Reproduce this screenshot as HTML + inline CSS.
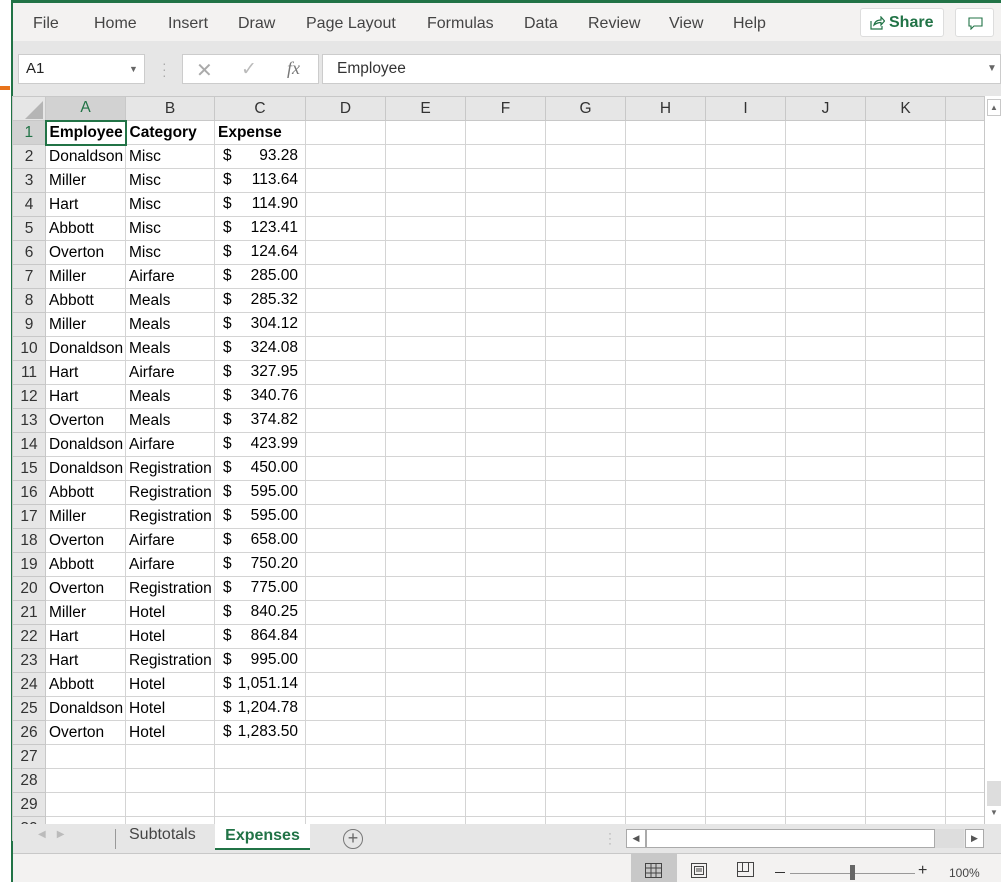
<!DOCTYPE html>
<html><head><meta charset="utf-8"><style>
*{box-sizing:border-box;margin:0;padding:0}
body{width:1001px;height:882px;overflow:hidden;background:#fff;font-family:"Liberation Sans",sans-serif;position:relative}
.abs{position:absolute}
#menu span{position:absolute;top:12px;font-size:16px;color:#444}
table{border-collapse:collapse;table-layout:fixed;position:absolute;left:12px;top:96px;width:972px}
td{border:1px solid #d4d4d4;height:24px;font-size:15.5px;color:#000;white-space:nowrap;overflow:hidden;padding:0;text-indent:3px;line-height:22px}
tr.h td{background:#e6e6e6;text-align:center;color:#333;height:24px;border-color:#c8c8c8;text-indent:0}
td.r{background:#e6e6e6;text-align:center;color:#333;border-color:#c8c8c8;text-indent:0}
td.c{position:relative;text-indent:0}
td.c b{font-weight:normal;position:absolute;left:8px;top:0}
td.c i{font-style:normal;position:absolute;right:7px;top:0}
</style></head><body>
<div class="abs" style="left:0;top:0;width:11px;height:882px;background:#fff"></div>
<div class="abs" style="left:0;top:86px;width:10px;height:4px;background:#e8731b"></div>
<div class="abs" style="left:11px;top:0;width:2px;height:882px;background:#217346"></div>
<div class="abs" style="left:13px;top:0;width:988px;height:3px;background:#217346"></div>
<div id="menu" class="abs" style="left:13px;top:3px;width:988px;height:38px;background:#f3f2f1">
<span style="left:20px">File</span><span style="left:81px">Home</span><span style="left:155px">Insert</span><span style="left:225px">Draw</span><span style="left:293px">Page Layout</span><span style="left:414px">Formulas</span><span style="left:511px">Data</span><span style="left:575px">Review</span><span style="left:656px">View</span><span style="left:720px">Help</span>
</div>
<div class="abs" style="left:860px;top:8px;width:84px;height:29px;background:#fff;border:1px solid #ddd;border-radius:3px;color:#217346;font-weight:bold;font-size:16px;line-height:27px;padding-left:28px">Share
<svg class="abs" style="left:9px;top:7px" width="15" height="14" viewBox="0 0 15 14"><path d="M1 5v8h11v-3M4 9c1-4 4-5 7-5V1l3.5 4L11 9V6.5C8 6.5 6 7.5 4 9z" fill="none" stroke="#217346" stroke-width="1.2"/></svg></div>
<div class="abs" style="left:955px;top:8px;width:39px;height:29px;background:#fff;border:1px solid #ddd;border-radius:3px">
<svg class="abs" style="left:12px;top:8px" width="15" height="13"><path d="M1 1h13v8H6l-3 3V9H1z" fill="none" stroke="#217346" stroke-width="1.1"/></svg></div>
<div class="abs" style="left:13px;top:41px;width:988px;height:55px;background:#e6e6e6"></div>
<div class="abs" style="left:18px;top:54px;width:127px;height:30px;background:#fff;border:1px solid #ccc;font-size:15px;line-height:28px;padding-left:7px;color:#222">A1<span class="abs" style="left:110px;top:0;font-size:9px;color:#666">▼</span></div>
<div class="abs" style="left:162px;top:60px;color:#aaa;font-size:14px;line-height:6px">·<br>·<br>·</div>
<div class="abs" style="left:182px;top:54px;width:137px;height:30px;background:#fff;border:1px solid #ccc;color:#aaa">
<span class="abs" style="left:13px;top:3px;font-size:20px">✕</span><span class="abs" style="left:58px;top:3px;font-size:19px;color:#bbb">✓</span><span class="abs" style="left:104px;top:3px;font-size:18px;font-style:italic;font-family:'Liberation Serif',serif;color:#777">fx</span></div>
<div class="abs" style="left:322px;top:54px;width:679px;height:30px;background:#fff;border:1px solid #ccc;font-size:15.5px;line-height:28px;padding-left:14px;color:#333">Employee<span class="abs" style="left:664px;top:0;font-size:10px;color:#666">▼</span></div>
<table>
<colgroup><col style="width:33px"><col style="width:80px"><col style="width:89px"><col style="width:91px"><col style="width:80px"><col style="width:80px"><col style="width:80px"><col style="width:80px"><col style="width:80px"><col style="width:80px"><col style="width:80px"><col style="width:80px"><col style="width:39px"></colgroup>
<tr class="h"><td style="background:#e6e6e6"><svg width="20" height="18" style="display:block;margin:3px 0 0 10px"><path d="M20 0V18H2z" fill="#b5b5b5"/></svg></td><td style="background:#d2d2d2;color:#217346">A</td><td>B</td><td>C</td><td>D</td><td>E</td><td>F</td><td>G</td><td>H</td><td>I</td><td>J</td><td>K</td><td></td></tr>
<tr><td class="r" style="background:#d2d2d2;color:#217346">1</td><td style="border:2px solid #217346;font-weight:bold">Employee</td><td style="font-weight:bold">Category</td><td style="font-weight:bold">Expense</td><td></td><td></td><td></td><td></td><td></td><td></td><td></td><td></td><td></td></tr>
<tr><td class="r">2</td><td>Donaldson</td><td>Misc</td><td class="c"><b>$</b><i>93.28</i></td><td></td><td></td><td></td><td></td><td></td><td></td><td></td><td></td><td></td></tr>
<tr><td class="r">3</td><td>Miller</td><td>Misc</td><td class="c"><b>$</b><i>113.64</i></td><td></td><td></td><td></td><td></td><td></td><td></td><td></td><td></td><td></td></tr>
<tr><td class="r">4</td><td>Hart</td><td>Misc</td><td class="c"><b>$</b><i>114.90</i></td><td></td><td></td><td></td><td></td><td></td><td></td><td></td><td></td><td></td></tr>
<tr><td class="r">5</td><td>Abbott</td><td>Misc</td><td class="c"><b>$</b><i>123.41</i></td><td></td><td></td><td></td><td></td><td></td><td></td><td></td><td></td><td></td></tr>
<tr><td class="r">6</td><td>Overton</td><td>Misc</td><td class="c"><b>$</b><i>124.64</i></td><td></td><td></td><td></td><td></td><td></td><td></td><td></td><td></td><td></td></tr>
<tr><td class="r">7</td><td>Miller</td><td>Airfare</td><td class="c"><b>$</b><i>285.00</i></td><td></td><td></td><td></td><td></td><td></td><td></td><td></td><td></td><td></td></tr>
<tr><td class="r">8</td><td>Abbott</td><td>Meals</td><td class="c"><b>$</b><i>285.32</i></td><td></td><td></td><td></td><td></td><td></td><td></td><td></td><td></td><td></td></tr>
<tr><td class="r">9</td><td>Miller</td><td>Meals</td><td class="c"><b>$</b><i>304.12</i></td><td></td><td></td><td></td><td></td><td></td><td></td><td></td><td></td><td></td></tr>
<tr><td class="r">10</td><td>Donaldson</td><td>Meals</td><td class="c"><b>$</b><i>324.08</i></td><td></td><td></td><td></td><td></td><td></td><td></td><td></td><td></td><td></td></tr>
<tr><td class="r">11</td><td>Hart</td><td>Airfare</td><td class="c"><b>$</b><i>327.95</i></td><td></td><td></td><td></td><td></td><td></td><td></td><td></td><td></td><td></td></tr>
<tr><td class="r">12</td><td>Hart</td><td>Meals</td><td class="c"><b>$</b><i>340.76</i></td><td></td><td></td><td></td><td></td><td></td><td></td><td></td><td></td><td></td></tr>
<tr><td class="r">13</td><td>Overton</td><td>Meals</td><td class="c"><b>$</b><i>374.82</i></td><td></td><td></td><td></td><td></td><td></td><td></td><td></td><td></td><td></td></tr>
<tr><td class="r">14</td><td>Donaldson</td><td>Airfare</td><td class="c"><b>$</b><i>423.99</i></td><td></td><td></td><td></td><td></td><td></td><td></td><td></td><td></td><td></td></tr>
<tr><td class="r">15</td><td>Donaldson</td><td>Registration</td><td class="c"><b>$</b><i>450.00</i></td><td></td><td></td><td></td><td></td><td></td><td></td><td></td><td></td><td></td></tr>
<tr><td class="r">16</td><td>Abbott</td><td>Registration</td><td class="c"><b>$</b><i>595.00</i></td><td></td><td></td><td></td><td></td><td></td><td></td><td></td><td></td><td></td></tr>
<tr><td class="r">17</td><td>Miller</td><td>Registration</td><td class="c"><b>$</b><i>595.00</i></td><td></td><td></td><td></td><td></td><td></td><td></td><td></td><td></td><td></td></tr>
<tr><td class="r">18</td><td>Overton</td><td>Airfare</td><td class="c"><b>$</b><i>658.00</i></td><td></td><td></td><td></td><td></td><td></td><td></td><td></td><td></td><td></td></tr>
<tr><td class="r">19</td><td>Abbott</td><td>Airfare</td><td class="c"><b>$</b><i>750.20</i></td><td></td><td></td><td></td><td></td><td></td><td></td><td></td><td></td><td></td></tr>
<tr><td class="r">20</td><td>Overton</td><td>Registration</td><td class="c"><b>$</b><i>775.00</i></td><td></td><td></td><td></td><td></td><td></td><td></td><td></td><td></td><td></td></tr>
<tr><td class="r">21</td><td>Miller</td><td>Hotel</td><td class="c"><b>$</b><i>840.25</i></td><td></td><td></td><td></td><td></td><td></td><td></td><td></td><td></td><td></td></tr>
<tr><td class="r">22</td><td>Hart</td><td>Hotel</td><td class="c"><b>$</b><i>864.84</i></td><td></td><td></td><td></td><td></td><td></td><td></td><td></td><td></td><td></td></tr>
<tr><td class="r">23</td><td>Hart</td><td>Registration</td><td class="c"><b>$</b><i>995.00</i></td><td></td><td></td><td></td><td></td><td></td><td></td><td></td><td></td><td></td></tr>
<tr><td class="r">24</td><td>Abbott</td><td>Hotel</td><td class="c"><b>$</b><i>1,051.14</i></td><td></td><td></td><td></td><td></td><td></td><td></td><td></td><td></td><td></td></tr>
<tr><td class="r">25</td><td>Donaldson</td><td>Hotel</td><td class="c"><b>$</b><i>1,204.78</i></td><td></td><td></td><td></td><td></td><td></td><td></td><td></td><td></td><td></td></tr>
<tr><td class="r">26</td><td>Overton</td><td>Hotel</td><td class="c"><b>$</b><i>1,283.50</i></td><td></td><td></td><td></td><td></td><td></td><td></td><td></td><td></td><td></td></tr>
<tr><td class="r">27</td><td></td><td></td><td></td><td></td><td></td><td></td><td></td><td></td><td></td><td></td><td></td><td></td></tr>
<tr><td class="r">28</td><td></td><td></td><td></td><td></td><td></td><td></td><td></td><td></td><td></td><td></td><td></td><td></td></tr>
<tr><td class="r">29</td><td></td><td></td><td></td><td></td><td></td><td></td><td></td><td></td><td></td><td></td><td></td><td></td></tr>
<tr><td class="r">30</td><td></td><td></td><td></td><td></td><td></td><td></td><td></td><td></td><td></td><td></td><td></td><td></td></tr>
</table>
<div class="abs" style="left:984px;top:96px;width:17px;height:728px;background:#fff;border-left:1px solid #c8c8c8"></div>
<div class="abs" style="left:987px;top:99px;width:14px;height:17px;border:1px solid #c8c8c8;background:#fff;font-size:8px;color:#666;text-align:center;line-height:15px">▲</div>
<div class="abs" style="left:987px;top:781px;width:14px;height:25px;background:#ddd"></div>
<div class="abs" style="left:987px;top:808px;width:14px;height:14px;font-size:8px;color:#666;text-align:center">▼</div>
<div class="abs" style="left:13px;top:824px;width:988px;height:30px;background:#e6e6e6;border-bottom:1px solid #c8c8c8"></div>
<div class="abs" style="left:38px;top:829px;font-size:10px;color:#bbb">◀&nbsp;&nbsp;&nbsp;&nbsp;▶</div>
<div class="abs" style="left:115px;top:829px;width:1px;height:20px;background:#999"></div>
<div class="abs" style="left:129px;top:826px;font-size:16px;color:#444">Subtotals</div>
<div class="abs" style="left:215px;top:824px;width:95px;height:26px;background:#fff;border-bottom:2px solid #217346;color:#217346;font-weight:bold;font-size:16px;text-align:center;line-height:24px">Expenses</div>
<div class="abs" style="left:343px;top:829px;width:20px;height:20px;border:1.5px solid #777;border-radius:50%;text-align:center;line-height:17px;color:#666;font-size:18px">+</div>
<div class="abs" style="left:608px;top:831px;color:#aaa;font-size:12px;line-height:5px">·<br>·<br>·</div>
<div class="abs" style="left:626px;top:829px;width:20px;height:19px;background:#fff;border:1px solid #aaa;font-size:9px;color:#555;text-align:center;line-height:17px">◀</div>
<div class="abs" style="left:646px;top:829px;width:289px;height:19px;background:#fff;border:1px solid #aaa"></div>
<div class="abs" style="left:935px;top:829px;width:29px;height:19px;background:#ddd"></div>
<div class="abs" style="left:965px;top:829px;width:19px;height:19px;background:#fff;border:1px solid #aaa;font-size:9px;color:#555;text-align:center;line-height:17px">▶</div>
<div class="abs" style="left:13px;top:854px;width:988px;height:28px;background:#f3f2f1"></div>
<div class="abs" style="left:631px;top:854px;width:46px;height:28px;background:#c8c8c8"></div>
<svg class="abs" style="left:645px;top:863px" width="17" height="15"><path d="M.5 .5h16v14H.5zM.5 5h16M.5 10h16M6 .5v14M11 .5v14" fill="none" stroke="#444"/></svg>
<svg class="abs" style="left:691px;top:863px" width="17" height="15"><path d="M.5 .5h15v14H.5zM3.5 3.5h9v8h-9zM5 6h6M5 8h6" fill="none" stroke="#444"/></svg>
<svg class="abs" style="left:737px;top:862px" width="18" height="15"><path d="M.5 .5h16v14H.5zM.5 9.5h11V.5M5.5 .5v9" fill="none" stroke="#444"/></svg>
<div class="abs" style="left:775px;top:872px;width:10px;height:1px;background:#333"></div>
<div class="abs" style="left:790px;top:873px;width:125px;height:1px;background:#999"></div>
<div class="abs" style="left:850px;top:865px;width:5px;height:15px;background:#666"></div>
<div class="abs" style="left:918px;top:862px;font-size:16px;color:#333">+</div>
<div class="abs" style="left:949px;top:866px;font-size:12px;color:#444">100%</div>
</body></html>
